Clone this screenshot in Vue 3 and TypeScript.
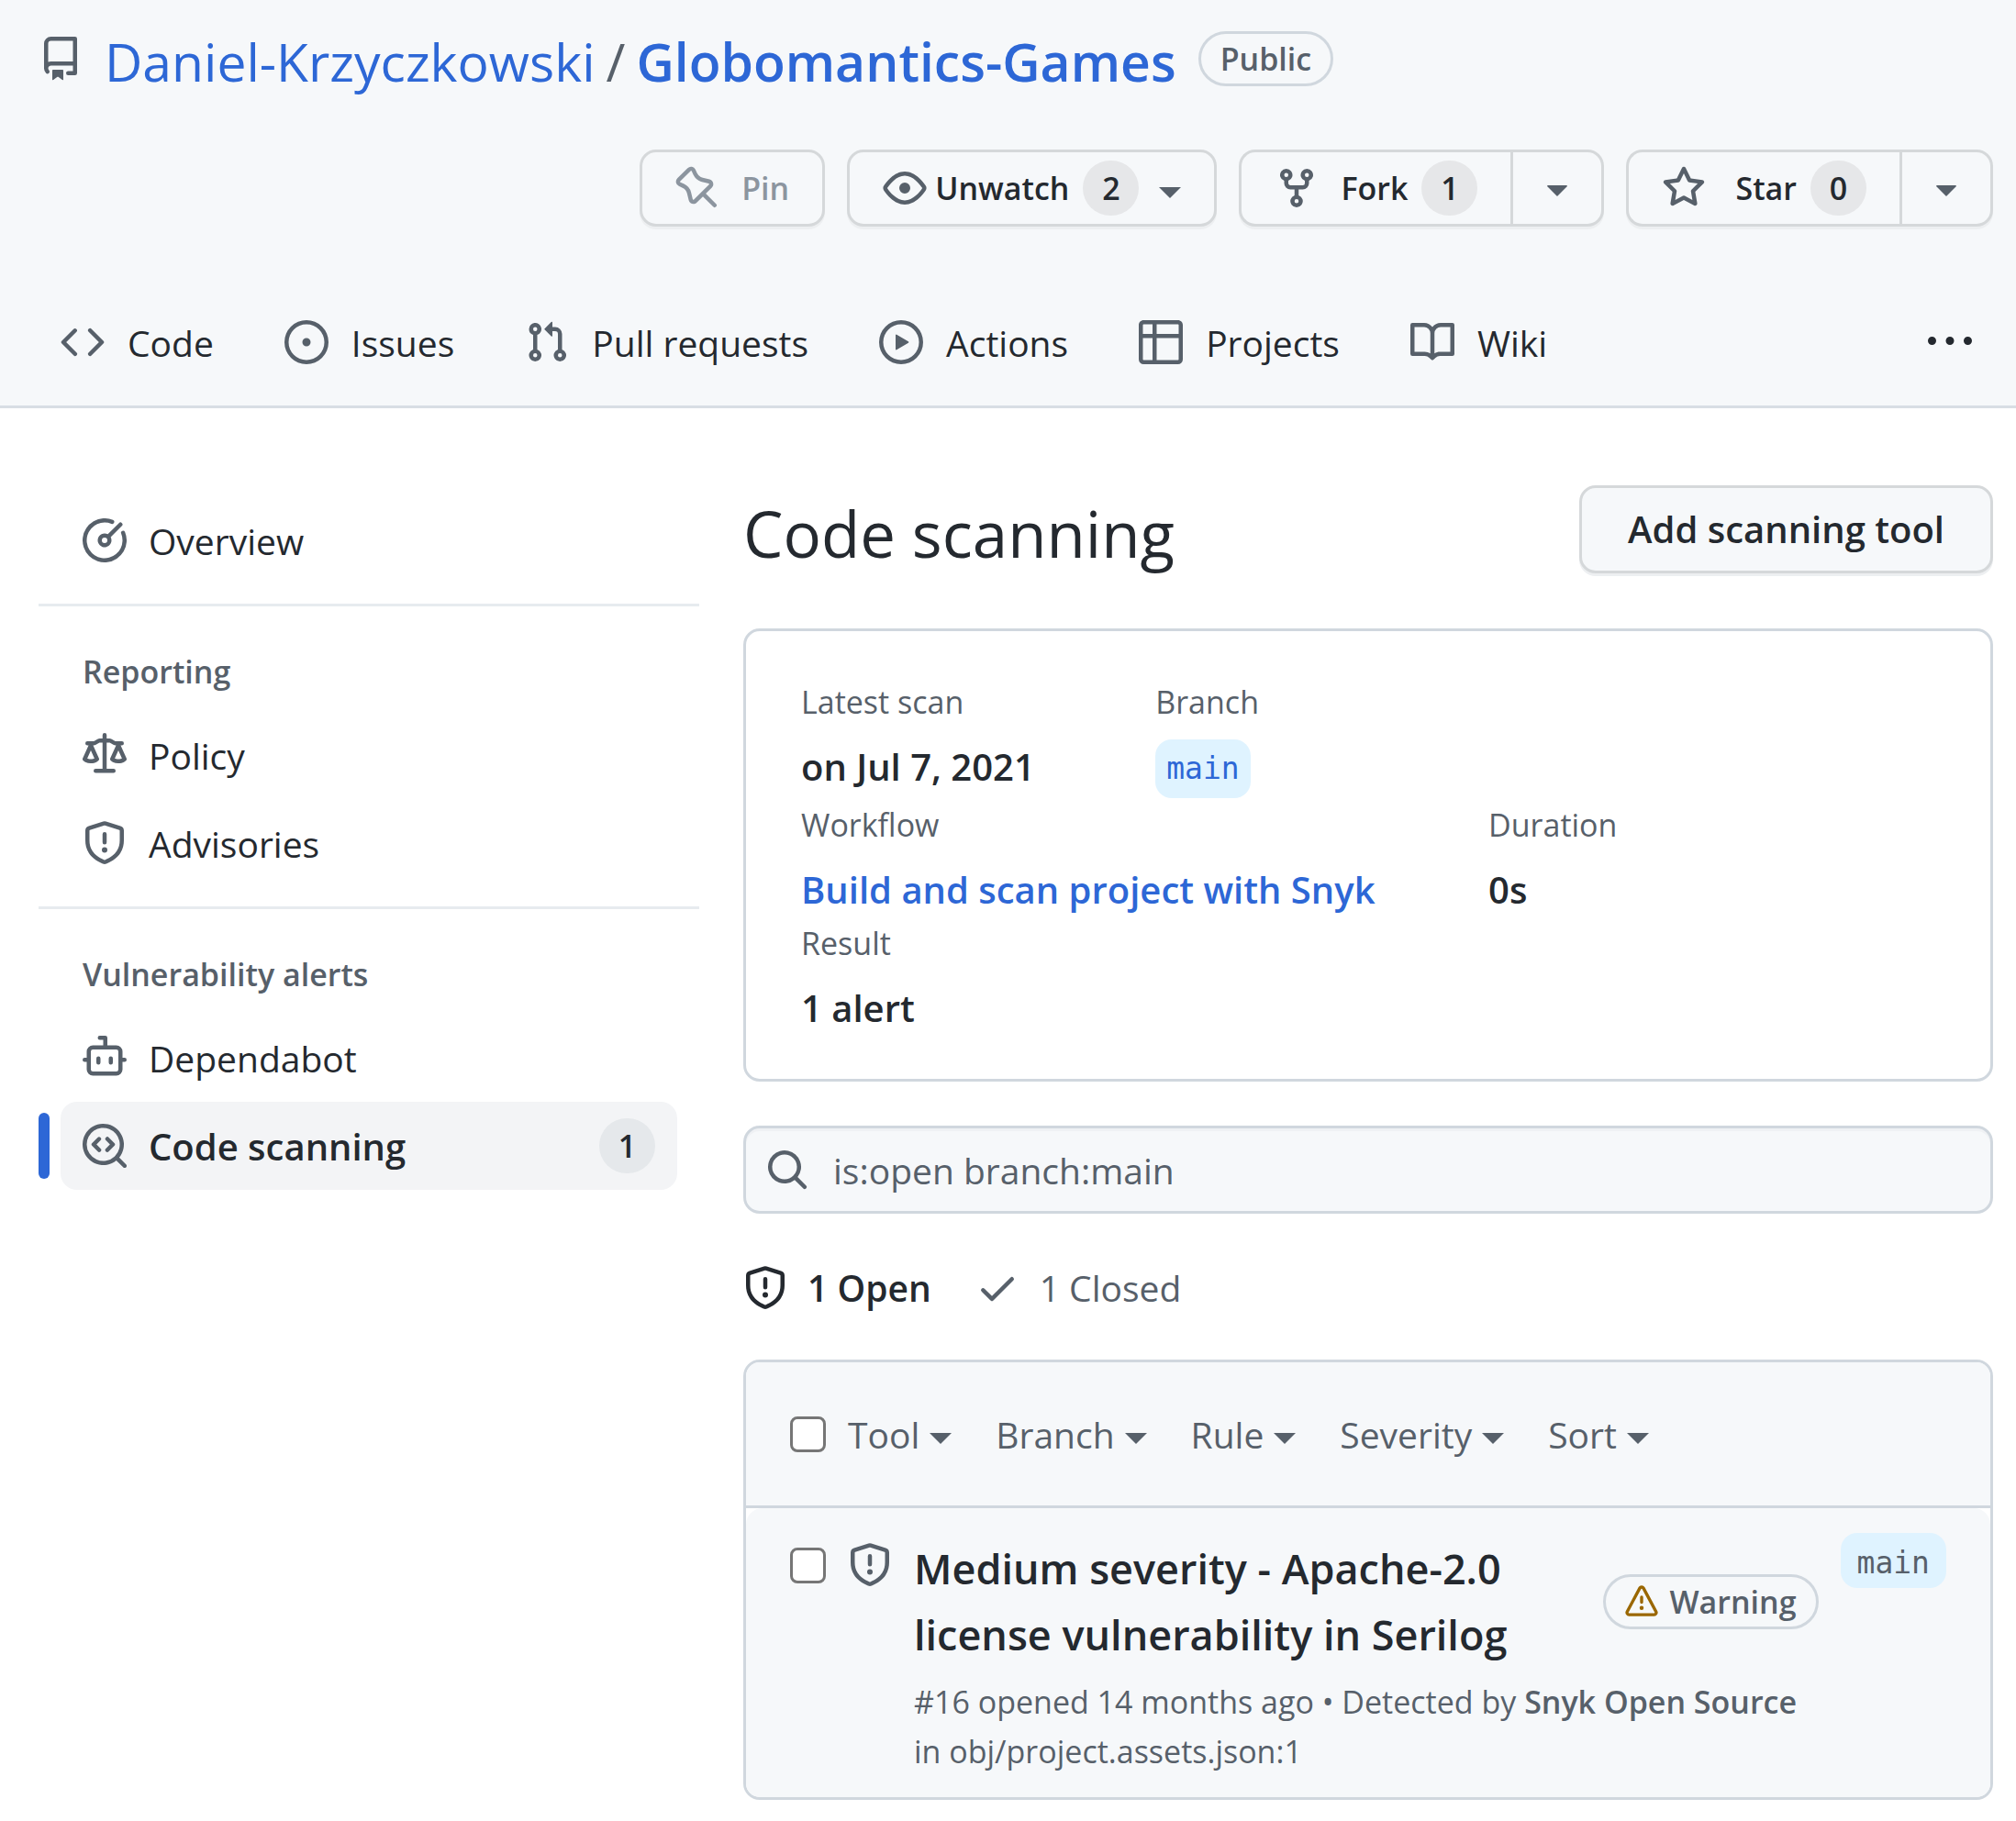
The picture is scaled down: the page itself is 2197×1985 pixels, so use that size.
<script setup lang="ts">
import { ref } from 'vue'

const icons = {
  repo: 'M2 2.5A2.5 2.5 0 014.5 0h8.75a.75.75 0 01.75.75v12.5a.75.75 0 01-.75.75h-2.5a.75.75 0 110-1.5h1.75v-2h-8a1 1 0 00-.714 1.7.75.75 0 01-1.072 1.05A2.495 2.495 0 012 11.5v-9zm10.5-1V9h-8c-.356 0-.694.074-1 .208V2.5a1 1 0 011-1h8zM5 12.25v3.25a.25.25 0 00.4.2l1.45-1.087a.25.25 0 01.3 0L8.6 15.7a.25.25 0 00.4-.2v-3.25a.25.25 0 00-.25-.25h-3.5a.25.25 0 00-.25.25z',
  pin: 'M4.456.734a1.75 1.75 0 012.826.504l.613 1.327a3.081 3.081 0 002.084 1.707l2.454.584c1.332.317 1.8 1.972.832 2.94L11.06 10l3.72 3.72a.75.75 0 11-1.061 1.06L10 11.06l-2.204 2.205c-.968.968-2.623.5-2.94-.832l-.584-2.454a3.081 3.081 0 00-1.707-2.084l-1.327-.613a1.75 1.75 0 01-.504-2.826L4.456.734zM5.92 1.866a.25.25 0 00-.404-.072L1.794 5.516a.25.25 0 00.072.404l1.328.613A4.582 4.582 0 015.73 9.63l.584 2.454a.25.25 0 00.42.12l5.47-5.47a.25.25 0 00-.12-.42L9.63 5.73a4.581 4.581 0 01-3.098-2.537L5.92 1.866z',
  eye: 'M1.679 7.932c.412-.621 1.242-1.75 2.366-2.717C5.175 4.242 6.527 3.5 8 3.5c1.473 0 2.824.742 3.955 1.715 1.124.967 1.954 2.096 2.366 2.717a.119.119 0 010 .136c-.412.621-1.242 1.75-2.366 2.717C10.825 11.758 9.473 12.5 8 12.5c-1.473 0-2.824-.742-3.955-1.715C2.92 9.818 2.09 8.69 1.679 8.068a.119.119 0 010-.136zM8 2c-1.981 0-3.67.992-4.933 2.078C1.797 5.169.88 6.423.43 7.1a1.619 1.619 0 000 1.798c.45.678 1.367 1.932 2.637 3.024C4.329 13.008 6.019 14 8 14c1.981 0 3.67-.992 4.933-2.078 1.27-1.091 2.187-2.345 2.637-3.023a1.619 1.619 0 000-1.798c-.45-.678-1.367-1.932-2.637-3.023C11.671 2.992 9.981 2 8 2zm0 8a2 2 0 100-4 2 2 0 000 4z',
  fork: 'M5 5.372v.878c0 .414.336.75.75.75h4.5a.75.75 0 00.75-.75v-.878a2.25 2.25 0 111.5 0v.878a2.25 2.25 0 01-2.25 2.25h-1.5v2.128a2.251 2.251 0 11-1.5 0V8.5h-1.5A2.25 2.25 0 013.5 6.25v-.878a2.25 2.25 0 111.5 0zM5 3.25a.75.75 0 10-1.5 0 .75.75 0 001.5 0zm6.75.75a.75.75 0 100-1.5.75.75 0 000 1.5zm-3 8.75a.75.75 0 10-1.5 0 .75.75 0 001.5 0z',
  star: 'M8 .25a.75.75 0 01.673.418l1.882 3.815 4.21.612a.75.75 0 01.416 1.279l-3.046 2.97.719 4.192a.75.75 0 01-1.088.791L8 12.347l-3.766 1.98a.75.75 0 01-1.088-.79l.72-4.194L.818 6.374a.75.75 0 01.416-1.28l4.21-.611L7.327.668A.75.75 0 018 .25zm0 2.445L6.615 5.5a.75.75 0 01-.564.41l-3.097.45 2.24 2.184a.75.75 0 01.216.664l-.528 3.084 2.769-1.456a.75.75 0 01.698 0l2.77 1.456-.53-3.084a.75.75 0 01.216-.664l2.24-2.183-3.096-.45a.75.75 0 01-.564-.41L8 2.694v.001z',
  triangle: 'M4.427 7.427l3.396 3.396a.25.25 0 00.354 0l3.396-3.396A.25.25 0 0011.396 7H4.604a.25.25 0 00-.177.427z',
  code: 'M4.72 3.22a.75.75 0 011.06 1.06L2.06 8l3.72 3.72a.75.75 0 11-1.06 1.06L.47 8.53a.75.75 0 010-1.06l4.25-4.25zm6.56 0a.75.75 0 10-1.06 1.06L13.94 8l-3.72 3.72a.75.75 0 101.06 1.06l4.25-4.25a.75.75 0 000-1.06l-4.25-4.25z',
  issue: 'M8 9.5a1.5 1.5 0 100-3 1.5 1.5 0 000 3zM8 0a8 8 0 100 16A8 8 0 008 0zM1.5 8a6.5 6.5 0 1113 0 6.5 6.5 0 01-13 0z',
  pull: 'M7.177 3.073L9.573.677A.25.25 0 0110 .854v4.792a.25.25 0 01-.427.177L7.177 3.427a.25.25 0 010-.354zM3.75 2.5a.75.75 0 100 1.5.75.75 0 000-1.5zm-2.25.75a2.25 2.25 0 113 2.122v5.256a2.251 2.251 0 11-1.5 0V5.372A2.25 2.25 0 011.5 3.25zM11 2.5h-1V4h1a1 1 0 011 1v5.628a2.251 2.251 0 101.5 0V5A2.5 2.5 0 0011 2.5zm1 10.25a.75.75 0 111.5 0 .75.75 0 01-1.5 0zM3.75 12a.75.75 0 100 1.5.75.75 0 000-1.5z',
  play: 'M1.5 8a6.5 6.5 0 1113 0 6.5 6.5 0 01-13 0zM8 0a8 8 0 100 16A8 8 0 008 0zM6.379 5.227A.25.25 0 006 5.442v5.117a.25.25 0 00.379.214l4.264-2.559a.25.25 0 000-.428L6.379 5.227z',
  table: 'M0 1.75C0 .784.784 0 1.75 0h12.5C15.216 0 16 .784 16 1.75v12.5A1.75 1.75 0 0114.25 16H1.75A1.75 1.75 0 010 14.25V1.75zM1.5 6.5v7.75c0 .138.112.25.25.25H5v-8H1.5zM5 5H1.5V1.75a.25.25 0 01.25-.25H5V5zm1.5 1.5v8h7.75a.25.25 0 00.25-.25V6.5h-8zm8-1.5h-8V1.5h7.75a.25.25 0 01.25.25V5z',
  book: 'M0 1.75A.75.75 0 01.75 1h4.253c1.227 0 2.317.59 3 1.501A3.744 3.744 0 0111.006 1h4.245a.75.75 0 01.75.75v10.5a.75.75 0 01-.75.75h-4.507a2.25 2.25 0 00-1.591.659l-.622.621a.75.75 0 01-1.06 0l-.622-.621A2.25 2.25 0 005.258 13H.75a.75.75 0 01-.75-.75V1.75zm8.755 3a2.25 2.25 0 012.25-2.25H14.5v9h-3.757c-.71 0-1.4.201-1.992.572l.004-7.322zm-1.504 7.324l.004-5.073-.002-2.253A2.25 2.25 0 005.003 2.5H1.5v9h3.757a3.75 3.75 0 011.994.574z',
  kebab: 'M8 9a1.5 1.5 0 100-3 1.5 1.5 0 000 3zM1.5 9a1.5 1.5 0 100-3 1.5 1.5 0 000 3zm13 0a1.5 1.5 0 100-3 1.5 1.5 0 000 3z',
  meter: 'M8 1.5a6.5 6.5 0 106.016 4.035.75.75 0 011.388-.57 8 8 0 11-4.37-4.37.75.75 0 01-.569 1.389A6.479 6.479 0 008 1.5zm6.28.22a.75.75 0 010 1.06l-4.063 4.064a2.5 2.5 0 11-1.06-1.06L13.22 1.72a.75.75 0 011.06 0zM7 8a1 1 0 112 0 1 1 0 01-2 0z',
  law: 'M8.75.75a.75.75 0 00-1.5 0V2h-.984c-.305 0-.604.08-.869.23l-1.288.737A.25.25 0 013.984 3H1.75a.75.75 0 000 1.5h.428L.066 9.192a.75.75 0 00.154.838l.53-.53-.53.53v.001l.002.002.002.002.006.006.016.015.045.04a3.514 3.514 0 00.686.45A4.492 4.492 0 003 11c.88 0 1.556-.22 2.023-.454a3.515 3.515 0 00.686-.45l.045-.04.016-.015.006-.006.002-.002.001-.002L5.25 9.5l.53.53a.75.75 0 00.154-.838L3.822 4.5h.162c.305 0 .604-.08.869-.23l1.289-.737a.25.25 0 01.124-.033h.984V13h-2.5a.75.75 0 000 1.5h6.5a.75.75 0 000-1.5h-2.5V3.5h.984a.25.25 0 01.124.033l1.29.736c.264.152.563.231.868.231h.162l-2.112 4.692a.75.75 0 00.154.838l.53-.53-.53.53v.001l.002.002.002.002.006.006.016.015.045.04a3.517 3.517 0 00.686.45A4.492 4.492 0 0013 11c.88 0 1.556-.22 2.023-.454a3.512 3.512 0 00.686-.45l.045-.04.01-.01.006-.005.006-.006.002-.002.001-.002-.529-.531.53.53a.75.75 0 00.154-.838L13.823 4.5h.427a.75.75 0 000-1.5h-2.234a.25.25 0 01-.124-.033l-1.29-.736A1.75 1.75 0 009.735 2H8.75V.75zM1.695 9.227c.285.135.718.273 1.305.273s1.02-.138 1.305-.273L3 6.327l-1.305 2.9zm10 0c.285.135.718.273 1.305.273s1.02-.138 1.305-.273L13 6.327l-1.305 2.9z',
  shield: 'M7.467.133a1.75 1.75 0 011.066 0l5.25 1.68A1.75 1.75 0 0115 3.48V7c0 1.566-.32 3.182-1.303 4.682-.983 1.498-2.585 2.813-5.032 3.855a1.7 1.7 0 01-1.33 0c-2.447-1.042-4.049-2.357-5.032-3.855C1.32 10.182 1 8.566 1 7V3.48a1.75 1.75 0 011.217-1.667l5.25-1.68zm.61 1.429a.25.25 0 00-.153 0l-5.25 1.68a.25.25 0 00-.174.238V7c0 1.358.275 2.666 1.057 3.86.784 1.194 2.121 2.34 4.366 3.297a.2.2 0 00.154 0c2.245-.956 3.582-2.104 4.366-3.298C13.225 9.666 13.5 8.36 13.5 7V3.48a.25.25 0 00-.174-.237l-5.25-1.68zM9 10.5a1 1 0 11-2 0 1 1 0 012 0zm-.25-5.75a.75.75 0 10-1.5 0v3a.75.75 0 001.5 0v-3z',
  bot: 'M5.75 7.5a.75.75 0 01.75.75v1.5a.75.75 0 01-1.5 0v-1.5a.75.75 0 01.75-.75zm5.25.75a.75.75 0 00-1.5 0v1.5a.75.75 0 001.5 0v-1.5zM6.25 0a.75.75 0 000 1.5H7.5v2H3.75A2.25 2.25 0 001.5 5.75V8H.75a.75.75 0 000 1.5h.75v2.75a2.25 2.25 0 002.25 2.25h8.5a2.25 2.25 0 002.25-2.25V9.5h.75a.75.75 0 000-1.5h-.75V5.75a2.25 2.25 0 00-2.25-2.25H9V.75A.75.75 0 008.25 0h-2zM3 5.75A.75.75 0 013.75 5h8.5a.75.75 0 01.75.75v6.5a.75.75 0 01-.75.75h-8.5a.75.75 0 01-.75-.75v-6.5z',
  codescan: 'M8.47 4.97a.75.75 0 000 1.06L9.94 7.5 8.47 8.97a.75.75 0 101.06 1.06l2-2a.75.75 0 000-1.06l-2-2a.75.75 0 00-1.06 0zM6.53 6.03a.75.75 0 00-1.06-1.06l-2 2a.75.75 0 000 1.06l2 2a.75.75 0 101.06-1.06L5.06 7.5l1.47-1.47zM12.246 13.307a7.5 7.5 0 111.06-1.06l2.474 2.473a.75.75 0 11-1.06 1.06l-2.474-2.473zM1.5 7.5a6 6 0 1110.386 4.094.75.75 0 00-.292.293A6 6 0 011.5 7.5z',
  search: 'M11.5 7a4.499 4.499 0 11-8.998 0A4.499 4.499 0 0111.5 7zm-.82 4.74a6 6 0 111.06-1.06l3.04 3.04a.75.75 0 11-1.06 1.06l-3.04-3.04z',
  check: 'M13.78 4.22a.75.75 0 010 1.06l-7.25 7.25a.75.75 0 01-1.06 0L2.22 9.28a.75.75 0 011.06-1.06L6 10.94l6.72-6.72a.75.75 0 011.06 0z',
  alert: 'M8.22 1.754a.25.25 0 00-.44 0L1.698 13.132a.25.25 0 00.22.368h12.164a.25.25 0 00.22-.368L8.22 1.754zm-1.763-.707c.659-1.234 2.427-1.234 3.086 0l6.082 11.378A1.75 1.75 0 0114.082 15H1.918a1.75 1.75 0 01-1.543-2.575L6.457 1.047zM9 11a1 1 0 11-2 0 1 1 0 012 0zm-.25-5.25a.75.75 0 00-1.5 0v2.5a.75.75 0 001.5 0v-2.5z',
}

type IconName = keyof typeof icons

interface NavItem {
  label: string
  icon: IconName
  count?: number
  current?: boolean
}

interface NavGroup {
  heading?: string
  items: NavItem[]
}

const tabs: NavItem[] = [
  { label: 'Code', icon: 'code' },
  { label: 'Issues', icon: 'issue' },
  { label: 'Pull requests', icon: 'pull' },
  { label: 'Actions', icon: 'play' },
  { label: 'Projects', icon: 'table' },
  { label: 'Wiki', icon: 'book' },
]

const groups: NavGroup[] = [
  { items: [{ label: 'Overview', icon: 'meter' }] },
  {
    heading: 'Reporting',
    items: [
      { label: 'Policy', icon: 'law' },
      { label: 'Advisories', icon: 'shield' },
    ],
  },
  {
    heading: 'Vulnerability alerts',
    items: [
      { label: 'Dependabot', icon: 'bot' },
      { label: 'Code scanning', icon: 'codescan', count: 1, current: true },
    ],
  },
]

const filters = ['Tool', 'Branch', 'Rule', 'Severity', 'Sort']
const query = ref('is:open branch:main')
const allSelected = ref(false)
const alertSelected = ref(false)
</script>

<template>
  <div class="page">
    <header class="repo-header">
      <div class="repo-title">
        <svg class="icon" viewBox="0 0 16 16" aria-hidden="true"><path :d="icons.repo" /></svg>
        <h1>
          <a href="#">Daniel-Krzyczkowski</a>
          <span class="slash">/</span>
          <a href="#" class="repo-name">Globomantics-Games</a>
        </h1>
        <span class="pill visibility">Public</span>
      </div>

      <div class="repo-actions">
        <button type="button" class="btn pin" disabled>
          <svg class="icon" viewBox="0 0 16 16" aria-hidden="true"><path :d="icons.pin" /></svg>
          <span>Pin</span>
        </button>
        <button type="button" class="btn watch" aria-haspopup="menu">
          <svg class="icon" viewBox="0 0 16 16" aria-hidden="true"><path :d="icons.eye" /></svg>
          <span>Unwatch</span>
          <span class="counter">2</span>
          <span class="caret"></span>
        </button>
        <div class="btn-group">
          <button type="button" class="btn">
            <svg class="icon" viewBox="0 0 16 16" aria-hidden="true"><path :d="icons.fork" /></svg>
            <span>Fork</span>
            <span class="counter">1</span>
          </button>
          <button type="button" class="btn more" aria-label="Fork options">
            <svg class="icon" viewBox="0 0 16 16" aria-hidden="true"><path :d="icons.triangle" /></svg>
          </button>
        </div>
        <div class="btn-group">
          <button type="button" class="btn star">
            <svg class="icon" viewBox="0 0 16 16" aria-hidden="true"><path :d="icons.star" /></svg>
            <span>Star</span>
            <span class="counter">0</span>
          </button>
          <button type="button" class="btn more" aria-label="Star lists">
            <svg class="icon" viewBox="0 0 16 16" aria-hidden="true"><path :d="icons.triangle" /></svg>
          </button>
        </div>
      </div>

      <nav class="tabs" aria-label="Repository">
        <a v-for="tab in tabs" :key="tab.label" href="#" class="tab">
          <svg class="icon" viewBox="0 0 16 16" aria-hidden="true"><path :d="icons[tab.icon]" /></svg>
          <span>{{ tab.label }}</span>
        </a>
        <button type="button" class="kebab" aria-label="More">
          <svg class="icon" viewBox="0 0 16 16" aria-hidden="true"><path :d="icons.kebab" /></svg>
        </button>
      </nav>
    </header>

    <div class="body">
      <nav class="sidebar" aria-label="Security">
        <section v-for="(group, i) in groups" :key="i" class="side-group">
          <h2 v-if="group.heading">{{ group.heading }}</h2>
          <ul>
            <li v-for="item in group.items" :key="item.label" :class="{ current: item.current }">
              <a href="#" :aria-current="item.current ? 'page' : undefined">
                <svg class="icon" viewBox="0 0 16 16" aria-hidden="true"><path :d="icons[item.icon]" /></svg>
                <span class="side-label">{{ item.label }}</span>
                <span v-if="item.count" class="counter">{{ item.count }}</span>
              </a>
            </li>
          </ul>
        </section>
      </nav>

      <main class="content">
        <div class="heading">
          <h2>Code scanning</h2>
          <button type="button" class="btn add">Add scanning tool</button>
        </div>

        <section class="summary">
          <dl class="split-a">
            <div>
              <dt>Latest scan</dt>
              <dd>on Jul 7, 2021</dd>
            </div>
            <div>
              <dt>Branch</dt>
              <dd><a href="#" class="branch">main</a></dd>
            </div>
          </dl>
          <dl class="split-b">
            <div>
              <dt>Workflow</dt>
              <dd><a href="#">Build and scan project with Snyk</a></dd>
            </div>
            <div>
              <dt>Duration</dt>
              <dd>0s</dd>
            </div>
          </dl>
          <dl>
            <div>
              <dt>Result</dt>
              <dd>1 alert</dd>
            </div>
          </dl>
        </section>

        <form class="search" role="search" @submit.prevent>
          <svg class="icon" viewBox="0 0 16 16" aria-hidden="true"><path :d="icons.search" /></svg>
          <input v-model="query" type="text" aria-label="Filter alerts" spellcheck="false" />
        </form>

        <div class="states">
          <a href="#" class="selected">
            <svg class="icon" viewBox="0 0 16 16" aria-hidden="true"><path :d="icons.shield" /></svg>
            <span>1 Open</span>
          </a>
          <a href="#">
            <svg class="icon" viewBox="0 0 16 16" aria-hidden="true"><path :d="icons.check" /></svg>
            <span>1 Closed</span>
          </a>
        </div>

        <section class="list">
          <div class="list-header">
            <input v-model="allSelected" type="checkbox" aria-label="Select all alerts" />
            <div class="filters">
              <button v-for="name in filters" :key="name" type="button" aria-haspopup="menu">
                <span>{{ name }}</span>
                <span class="caret"></span>
              </button>
            </div>
          </div>
          <article class="alert-row">
            <input v-model="alertSelected" type="checkbox" aria-label="Select alert 16" />
            <svg class="icon" viewBox="0 0 16 16" aria-hidden="true"><path :d="icons.shield" /></svg>
            <div class="alert-main">
              <div class="alert-top">
                <h3><a href="#">Medium severity - Apache-2.0 license vulnerability in Serilog</a></h3>
                <span class="pill severity">
                  <svg viewBox="0 0 16 16" aria-hidden="true"><path :d="icons.alert" /></svg>
                  <span>Warning</span>
                </span>
              </div>
              <p>#16 opened 14 months ago • Detected by <b>Snyk Open Source</b> in obj/project.assets.json:1</p>
            </div>
            <a href="#" class="branch muted">main</a>
          </article>
        </section>
      </main>
    </div>
  </div>
</template>

<style>
body {
  margin: 0;
  background: #ffffff;
}
</style>

<style scoped>
.page {
  font-family: "Open Sans", "Noto Sans", sans-serif;
  font-size: 39px;
  line-height: 63px;
  color: #24292f;
}

.page * {
  box-sizing: border-box;
}

a {
  color: #2d67d6;
  text-decoration: none;
}

button,
input {
  margin: 0;
  font-family: inherit;
  color: inherit;
}

button {
  cursor: pointer;
}

h1,
h2,
h3,
p,
ul,
dl,
dd {
  margin: 0;
  padding: 0;
}

ul {
  list-style: none;
}

svg {
  fill-rule: evenodd;
}

.icon {
  flex: none;
  display: block;
  width: 48px;
  height: 48px;
  fill: #57606a;
}

/* Header */

.repo-header {
  padding-top: 28px;
  background: #f6f8fa;
  border-bottom: 3px solid #d8dee4;
}

.repo-title {
  display: flex;
  align-items: flex-start;
  padding: 0 25px 0 42px;
}

.repo-title .icon {
  margin-top: 12px;
}

.repo-title h1 {
  display: flex;
  gap: 12px;
  margin-left: 24px;
  font-size: 57px;
  line-height: 78px;
  font-weight: 400;
}

.slash {
  color: #57606a;
}

.repo-title .repo-name {
  font-weight: 600;
}

.pill {
  display: flex;
  align-items: center;
  height: 60px;
  padding: 0 21px;
  border: 3px solid #d0d7de;
  border-radius: 30px;
  font-size: 34px;
  line-height: 54px;
  font-weight: 600;
  color: #57606a;
}

.visibility {
  margin: 6px 0 0 24px;
}

.repo-actions {
  display: flex;
  justify-content: flex-end;
  gap: 24px;
  margin-top: 57px;
  padding: 0 25px;
}

.btn {
  display: flex;
  align-items: center;
  justify-content: center;
  height: 84px;
  padding: 0 36px;
  background: #f6f8fa;
  border: 3px solid #d5d8da;
  border-radius: 18px;
  box-shadow: 0 3px 0 #edeff1;
  font-size: 34px;
  line-height: 54px;
  font-weight: 600;
}

.btn .icon + span {
  margin-left: 24px;
}

.btn.pin {
  color: #8c959f;
}

.btn.pin .icon {
  fill: #8c959f;
}

.btn.watch .icon + span {
  margin-left: 9px;
}

.btn.star .icon + span {
  margin-left: 32px;
}

.counter {
  flex: none;
  min-width: 61px;
  height: 60px;
  padding: 0 18px;
  border-radius: 30px;
  background: #e6e7e9;
  font-size: 34px;
  line-height: 60px;
  font-weight: 600;
  text-align: center;
}

.btn .counter {
  margin-left: 15px;
}

.caret {
  flex: none;
  width: 24px;
  height: 12px;
  margin-top: 10px;
  border: 12px solid transparent;
  border-top-color: #57606a;
  border-bottom: 0;
}

.btn .caret {
  margin-left: 22px;
}

.btn-group {
  display: flex;
}

.btn-group .btn:first-child {
  border-right: 0;
  border-radius: 18px 0 0 18px;
}

.btn-group .more {
  padding: 0 24px;
  border-radius: 0 18px 18px 0;
}

.tabs {
  display: flex;
  align-items: center;
  gap: 77px;
  height: 138px;
  margin-top: 57px;
  padding: 0 48px 0 66px;
}

.tab {
  display: flex;
  align-items: center;
  gap: 25px;
  color: #24292f;
  white-space: nowrap;
}

.kebab {
  margin-left: auto;
  padding: 0;
  border: 0;
  background: none;
}

.kebab .icon {
  fill: #24292f;
}

/* Layout below the header */

.body {
  display: flex;
  align-items: flex-start;
  gap: 48px;
  padding: 84px 25px 24px 42px;
}

.sidebar {
  flex: none;
  width: 720px;
  padding-top: 12px;
}

.side-group + .side-group {
  margin-top: 21px;
  padding-top: 44px;
  border-top: 3px solid #e7ebef;
}

.side-group h2 {
  padding: 0 48px 16px;
  font-size: 34px;
  line-height: 54px;
  font-weight: 600;
  color: #57606a;
}

.side-group li {
  position: relative;
  padding: 0 24px;
}

.side-group a {
  display: flex;
  align-items: center;
  gap: 24px;
  height: 96px;
  padding: 0 24px;
  border-radius: 18px;
  color: #24292f;
}

.side-label {
  flex: 1;
}

.current a {
  background: #f3f4f6;
  font-size: 40px;
  font-weight: 600;
}

.current::before {
  content: "";
  position: absolute;
  top: 12px;
  bottom: 12px;
  left: 0;
  width: 12px;
  border-radius: 6px;
  background: #2d67d6;
}

.current .counter {
  background: #e5e8eb;
}

.content {
  flex: 1;
  min-width: 0;
}

.heading {
  display: flex;
  align-items: flex-end;
  justify-content: space-between;
}

.heading h2 {
  font-size: 69px;
  line-height: 88px;
  font-weight: 400;
}

.add {
  height: 96px;
  padding: 0 50px;
  font-size: 40px;
}

/* Scan summary */

.summary {
  margin-top: 60px;
  padding: 50px 60px 46px;
  border: 3px solid #d0d7de;
  border-radius: 18px;
}

.summary dl {
  display: grid;
}

.summary .split-a {
  grid-template-columns: 5fr 11fr;
}

.summary .split-b {
  grid-template-columns: 20fr 13fr;
}

.summary dt {
  font-size: 34px;
  line-height: 54px;
  color: #57606a;
}

.summary dd {
  padding-top: 12px;
  font-size: 40px;
  font-weight: 600;
}

.branch {
  display: block;
  width: fit-content;
  margin: 2px 0;
  padding: 0 12px;
  border-radius: 18px;
  background: #dff3ff;
  font-family: "DejaVu Sans Mono", monospace;
  font-size: 33px;
  line-height: 64px;
  font-weight: 400;
}

/* Search and state links */

.search {
  display: flex;
  align-items: center;
  gap: 26px;
  height: 96px;
  margin-top: 48px;
  padding: 0 21px;
  border: 3px solid #d0d7de;
  border-radius: 18px;
  background: #f6f8fa;
  box-shadow: inset 0 3px 0 #eff1f4;
}

.search input {
  flex: 1;
  min-width: 0;
  height: 72px;
  padding: 0;
  border: 0;
  outline: 0;
  background: transparent;
  font-size: 39px;
  color: #57606a;
}

.states {
  display: flex;
  gap: 48px;
  margin: 54px 0 51px;
  line-height: 54px;
}

.states a {
  display: flex;
  align-items: center;
  gap: 22px;
  color: #57606a;
}

.states .selected {
  font-weight: 600;
  color: #24292f;
}

.states .selected .icon {
  fill: #24292f;
}

/* Alert list */

.list {
  border: 3px solid #d0d7de;
  border-radius: 18px;
}

.list-header {
  display: flex;
  align-items: center;
  gap: 24px;
  height: 159px;
  padding: 0 48px;
  border-bottom: 3px solid #d0d7de;
  border-radius: 15px 15px 0 0;
  background: #f6f8fa;
}

input[type="checkbox"] {
  flex: none;
  appearance: none;
  width: 39px;
  height: 39px;
  border: 3px solid #767676;
  border-radius: 8px;
  background: #ffffff;
}

input[type="checkbox"]:checked {
  border-color: #2d67d6;
  background: #2d67d6;
}

.filters {
  display: flex;
  gap: 48px;
}

.filters button {
  display: flex;
  align-items: center;
  gap: 11px;
  padding: 0;
  border: 0;
  background: none;
  font-size: 39px;
  line-height: 63px;
  color: #57606a;
}

.alert-row {
  display: flex;
  align-items: flex-start;
  padding: 0 48px 23px;
  border-radius: 18px 18px 15px 15px;
  background: #f6f8fa;
}

.alert-row input {
  margin: 43px 24px 0 0;
}

.alert-row > .icon {
  margin-top: 38px;
}

.alert-main {
  flex: 1;
  min-width: 0;
  margin: 30px 24px 0;
}

.alert-top {
  display: flex;
  align-items: center;
  gap: 24px;
}

.alert-top h3 {
  flex: 1;
  font-size: 45px;
  line-height: 72px;
  font-weight: 600;
}

.alert-top h3 a {
  color: #24292f;
}

.severity {
  flex: none;
  gap: 12px;
}

.severity svg {
  width: 36px;
  height: 36px;
  fill: #9a6700;
}

.alert-main p {
  margin-top: 10px;
  font-size: 34px;
  line-height: 54px;
  color: #57606a;
}

.alert-main b {
  font-weight: 600;
}

.branch.muted {
  flex: none;
  margin: 27px 0 0;
  padding: 6px 18px 0;
  line-height: 54px;
  color: #57606a;
}
</style>
